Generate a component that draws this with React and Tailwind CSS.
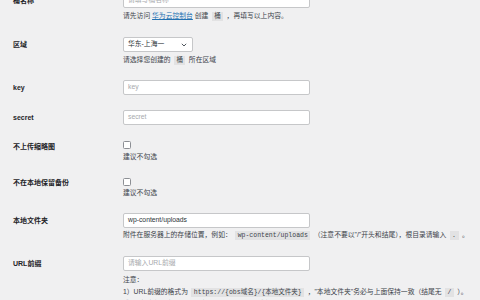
const font = "font-['Liberation_Sans','Noto_Sans_CJK_SC',sans-serif]";

const Code = ({ children }) => (
  <code className="bg-[#e2e2e3] px-[2.5px] py-[1px] mx-[1.5px] font-['Liberation_Mono','Noto_Sans_CJK_SC',monospace] text-[6.5px] text-[#3c434a]">
    {children}
  </code>
);

const TextInput = ({ value, placeholder }) => (
  <div className="w-[187px] h-[15px] border border-[#c6c7c9] rounded-[2px] bg-white flex items-center px-[4px] text-[6.8px]">
    {value ? (
      <span className="text-[#2c3338]">{value}</span>
    ) : (
      <span className="text-[#a7aaad]">{placeholder}</span>
    )}
  </div>
);

const Checkbox = () => (
  <div className="w-[8px] h-[8px] border border-[#8c8f94] rounded-[1.5px] bg-white" />
);

const Desc = ({ children, className = "" }) => (
  <p className={`text-[6.8px] leading-[10px] text-[#3c434a] whitespace-nowrap ${className}`}>{children}</p>
);

const Row = ({ label, labelPad = "pt-[3px]", className = "", children }) => (
  <div className={`flex ${className}`}>
    <div className={`w-[123px] shrink-0 pl-[13px] ${labelPad}`}>
      <span className="text-[7px] leading-[10px] font-semibold text-[#1d2327] block">{label}</span>
    </div>
    <div className="flex-1 min-w-0">{children}</div>
  </div>
);

export default function App() {
  return (
    <div className={`w-[480px] h-[300px] overflow-hidden bg-[#f0f0f1] ${font}`}>
      <div className="flex flex-col">
        <Row label="桶名称" className="mt-[-7px]">
          <TextInput placeholder="请填写桶名称" />
          <Desc className="mt-[3px]">
            请先访问 <a className="text-[#2271b1] underline">华为云控制台</a> 创建 <Code>桶</Code> ，再填写以上内容。
          </Desc>
        </Row>

        <Row label="区域" className="mt-[15px]">
          <div className="w-[70px] h-[15px] border border-[#c6c7c9] rounded-[2px] bg-white flex items-center justify-between pl-[4px] pr-[5px] text-[6.8px] text-[#2c3338]">
            <span>华东-上海一</span>
            <svg width="6" height="4" viewBox="0 0 6 4" fill="none">
              <path d="M0.8 0.8 L3 3 L5.2 0.8" stroke="#50575e" strokeWidth="1" />
            </svg>
          </div>
          <Desc className="mt-[3px]">
            请选择您创建的 <Code>桶</Code> 所在区域
          </Desc>
        </Row>

        <Row label="key" className="mt-[14px]">
          <TextInput placeholder="key" />
        </Row>

        <Row label="secret" className="mt-[15px]">
          <TextInput placeholder="secret" />
        </Row>

        <Row label="不上传缩略图" labelPad="pt-[1px]" className="mt-[16px]">
          <Checkbox />
          <Desc className="mt-[3px]">建议不勾选</Desc>
        </Row>

        <Row label="不在本地保留备份" labelPad="pt-[0px]" className="mt-[16px]">
          <Checkbox />
          <Desc className="mt-[2px]">建议不勾选</Desc>
        </Row>

        <Row label="本地文件夹" className="mt-[15px]">
          <TextInput value="wp-content/uploads" />
          <Desc className="mt-[2px]">
            附件在服务器上的存储位置，例如： <Code>wp-content/uploads</Code> （注意不要以"/"开头和结尾），根目录请输入 <Code>.</Code> 。
          </Desc>
        </Row>

        <Row label="URL前缀" className="mt-[15px]">
          <TextInput placeholder="请输入URL前缀" />
          <div className="mt-[3px] text-[6.8px] leading-[11.5px] text-[#3c434a] whitespace-nowrap">
            <p>注意：</p>
            <p>
              1）URL前缀的格式为 <Code>{"https://{obs域名}/{本地文件夹}"}</Code> ，"本地文件夹"务必与上面保持一致（结尾无 <Code>/</Code> ）。
            </p>
            <p>
              或者"本地文件夹"为 <Code>.</Code> 时 <Code>{"https://{obs域名}"}</Code> 。
            </p>
          </div>
        </Row>
      </div>
    </div>
  );
}
